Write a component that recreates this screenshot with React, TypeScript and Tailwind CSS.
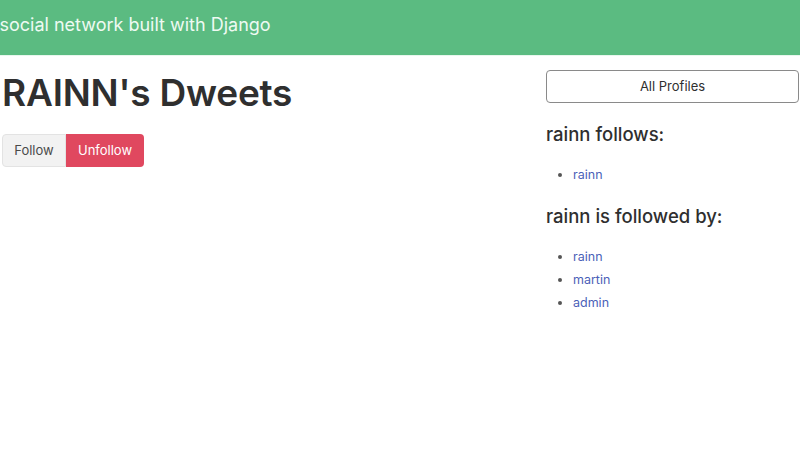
export default function App() {
  const font = { fontFamily: 'Inter, "Noto Sans", sans-serif' }
  return (
    <div className="w-[800px] h-[450px] overflow-hidden bg-white text-[#363636]" style={font}>
      <header className="h-[56px] bg-[#5bbb81] overflow-hidden border-b border-[#e8f7ee]">
        <div className="-ml-[18px] -mt-[29px]">
          <h1 className="text-[36px] leading-[30px] font-semibold text-white pl-[8px]">Dwitter</h1>
          <p className="mt-[12px] text-[18px] leading-[24px] text-[#eefaf2]">A social network built with Django</p>
        </div>
      </header>
      <main className="flex pl-[2px] pt-[13px]">
        <section className="flex-1">
          <h2 className="text-[37px] leading-[48px] font-semibold text-[#2f2f2f] tracking-[-0.2px]">RAINN's Dweets</h2>
          <div className="mt-[17px] flex">
            <button className="h-[33px] w-[64px] bg-[#f2f2f2] border border-[#e3e3e3] rounded-l-[4px] text-[13px] text-[#4a4a4a]">Follow</button>
            <button className="h-[33px] w-[78px] bg-[#e0485f] rounded-r-[4px] text-[13px] text-white">Unfollow</button>
          </div>
        </section>
        <aside className="w-[254px] pt-[1px]">
          <button className="w-[253px] h-[33px] border border-[#8a8a8a] rounded-[4px] text-[13px] text-[#2f2f2f]">All Profiles</button>
          <h3 className="mt-[18px] text-[18.5px] leading-[26px] font-medium text-[#2f2f2f]">rainn follows:</h3>
          <ul className="mt-[16px] ml-[27px] list-disc text-[12.5px] leading-[23px] marker:text-[#555]">
            <li><a className="text-[#4b5fb8]">rainn</a></li>
          </ul>
          <h3 className="mt-[17px] text-[18.5px] leading-[26px] font-medium text-[#2f2f2f]">rainn is followed by:</h3>
          <ul className="mt-[16px] ml-[27px] list-disc text-[12.5px] leading-[23px] marker:text-[#555]">
            <li><a className="text-[#4b5fb8]">rainn</a></li>
            <li><a className="text-[#4b5fb8]">martin</a></li>
            <li><a className="text-[#4b5fb8]">admin</a></li>
          </ul>
        </aside>
      </main>
    </div>
  )
}
